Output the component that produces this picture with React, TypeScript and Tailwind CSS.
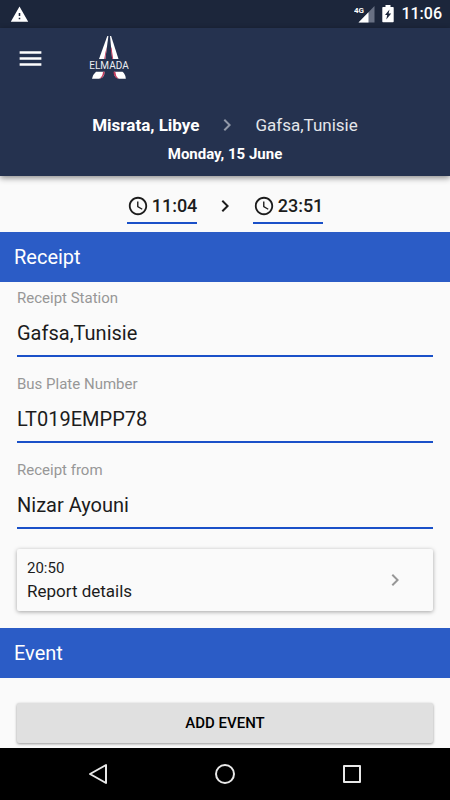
import { useState } from 'react';
import { MdAccessTime, MdChevronRight, MdMenu, MdWarning } from 'react-icons/md';

const initialReceipt = [
  { id: 'station', label: 'Receipt Station', value: 'Gafsa,Tunisie' },
  { id: 'plate', label: 'Bus Plate Number', value: 'LT019EMPP78' },
  { id: 'from', label: 'Receipt from', value: 'Nizar Ayouni' },
];

function Logo() {
  return (
    <svg width="40" height="46" viewBox="0 0 40 46" role="img" aria-label="Elmada">
      <path d="M18.300 1H19.400L16.300 24H10Z" fill="#fff" />
      <path d="M17.900 12L16.300 24H15.200L16.500 17Z" fill="#c23a5c" />
      <path d="M21 1H22.100L29.500 24H23.200Z" fill="#fff" />
      <path d="M22.400 12L24.200 24H23.200L21.800 14Z" fill="#c23a5c" />
      <text x="20" y="34" textAnchor="middle" fontSize="10" fontFamily="Roboto, sans-serif" fill="#eceef3">
        ELMADA
      </text>
      <path d="M7 36.700H15.500Q15.500 43 10 43.800H3Q4 39 7 36.700Z" fill="#fff" />
      <path d="M14 36.700H15.700Q15.500 42.500 10.500 43.800Q13.800 41 14 36.700Z" fill="#c23a5c" />
      <path d="M33.500 36.700H25Q25 43 30 43.800H36.800Q36.500 39 33.500 36.700Z" fill="#fff" />
      <path d="M26.300 36.700H24.500Q24.500 42.500 29.500 43.800Q26.500 41 26.300 36.700Z" fill="#c23a5c" />
    </svg>
  );
}

function StatusBar() {
  return (
    <div className="flex h-7 items-center justify-between bg-[#1c263b] pl-2.5 pr-2 text-white">
      <MdWarning size={19} />
      <div className="flex items-center gap-[7px]">
        <svg width="21" height="18" viewBox="0 0 21 18">
          <path d="M20.500 1V17.500H4.500Z" fill="#687083" />
          <path d="M14.500 7.200V17.500H4.500Z" fill="#fff" />
          <text x="0" y="8" fontSize="8" fontWeight="700" fontFamily="Roboto, sans-serif" fill="#fff">
            4G
          </text>
        </svg>
        <svg width="12" height="18" viewBox="0 0 12 18">
          <path d="M3.500 0H8.500V2H11Q11.700 2 11.700 2.700V16.500Q11.700 17.300 11 17.300H1Q0.300 17.300 0.300 16.500V2.700Q0.300 2 1 2H3.500Z" fill="#fff" />
          <path d="M7.500 4.500L3 10H5.200L4.300 14.500L9.200 8.500H6.600Z" fill="#1c263b" />
        </svg>
        <span className="text-base font-medium">11:06</span>
      </div>
    </div>
  );
}

function TimeButton({ time }: { time: string }) {
  return (
    <button type="button" className="flex h-9 w-[70px] items-center justify-center gap-[3px] border-b-2 border-[#1a50c8] pt-0.5 text-lg font-medium">
      <MdAccessTime size={22} className="shrink-0" />
      {time}
    </button>
  );
}

function SectionTitle({ title }: { title: string }) {
  return <h2 className="flex h-[50px] items-center bg-[#2b5cc6] px-3.5 text-xl text-white">{title}</h2>;
}

export default function App() {
  const [receipt, setReceipt] = useState(initialReceipt);

  const updateField = (id: string, value: string) => {
    setReceipt(receipt.map((f) => (f.id === id ? { ...f, value } : f)));
  };

  return (
    <div className="flex min-h-screen flex-col bg-[#fafafa] font-[Roboto,sans-serif] text-[#1c1c1c]">
      <StatusBar />

      {/* Header */}
      <header className="relative bg-[#25324f] pb-3 text-white shadow-[0_2px_6px_rgba(0,0,0,0.45)]">
        <div className="flex h-[60px] items-center gap-11 px-4">
          <button type="button" aria-label="Open menu">
            <MdMenu size={29} />
          </button>
          <Logo />
        </div>
        <div className="mt-[25px] flex h-6 items-center justify-center gap-4 text-[17px] leading-6">
          <span className="font-bold">Misrata, Libye</span>
          <MdChevronRight size={24} className="text-[#9299a8]" />
          <span className="text-[#e4e6eb]">Gafsa,Tunisie</span>
        </div>
        <p className="mt-[7px] text-center text-[15px] font-bold leading-5">Monday, 15 June</p>
      </header>

      <main className="flex-1">
        {/* Times */}
        <div className="flex h-14 items-center justify-center gap-4 pt-1">
          <TimeButton time="11:04" />
          <MdChevronRight size={24} />
          <TimeButton time="23:51" />
        </div>

        {/* Receipt */}
        <SectionTitle title="Receipt" />
        <div className="px-[17px] pb-[17px] pt-[7px]">
          <div className="space-y-[18px]">
            {receipt.map((field) => (
              <div key={field.id}>
                <label htmlFor={field.id} className="block text-[15px] leading-[18px] text-[#979797]">
                  {field.label}
                </label>
                <input
                  id={field.id}
                  type="text"
                  value={field.value}
                  onChange={(e) => updateField(field.id, e.target.value)}
                  className="block h-[50px] w-full border-b-2 border-[#1a50c8] pt-1 text-xl outline-none"
                />
              </div>
            ))}
          </div>

          <button
            type="button"
            className="mt-5 flex w-full items-center justify-between rounded-xs px-2.5 py-2 text-left shadow-[0_1px_4px_rgba(0,0,0,0.35)]"
          >
            <span>
              <span className="block text-[15px] leading-[22px]">20:50</span>
              <span className="block text-[17px] leading-6">Report details</span>
            </span>
            <MdChevronRight size={24} className="mr-4 text-[#979797]" />
          </button>
        </div>

        {/* Event */}
        <SectionTitle title="Event" />
        <div className="px-[17px] pb-1 pt-[25px]">
          <button type="button" className="h-10 w-full rounded-xs bg-[#e0e0e0] text-[15px] font-medium text-black shadow-[0_1px_3px_rgba(0,0,0,0.4)]">
            ADD EVENT
          </button>
        </div>
      </main>

      {/* System navigation */}
      <nav className="relative flex h-[52px] items-center justify-center gap-[103px] bg-black">
        <button type="button" aria-label="Back">
          <svg width="24" height="24" viewBox="0 0 24 24" fill="none" stroke="#e8e8e8" strokeWidth="2" strokeLinejoin="round">
            <path d="M20 3V21L4 12Z" />
          </svg>
        </button>
        <button type="button" aria-label="Home">
          <svg width="24" height="24" viewBox="0 0 24 24" fill="none" stroke="#e8e8e8" strokeWidth="2">
            <circle cx="12" cy="12" r="9" />
          </svg>
        </button>
        <button type="button" aria-label="Recent apps">
          <svg width="24" height="24" viewBox="0 0 24 24" fill="none" stroke="#e8e8e8" strokeWidth="2" strokeLinejoin="round">
            <rect x="4" y="4" width="16" height="16" />
          </svg>
        </button>
      </nav>
    </div>
  );
}
